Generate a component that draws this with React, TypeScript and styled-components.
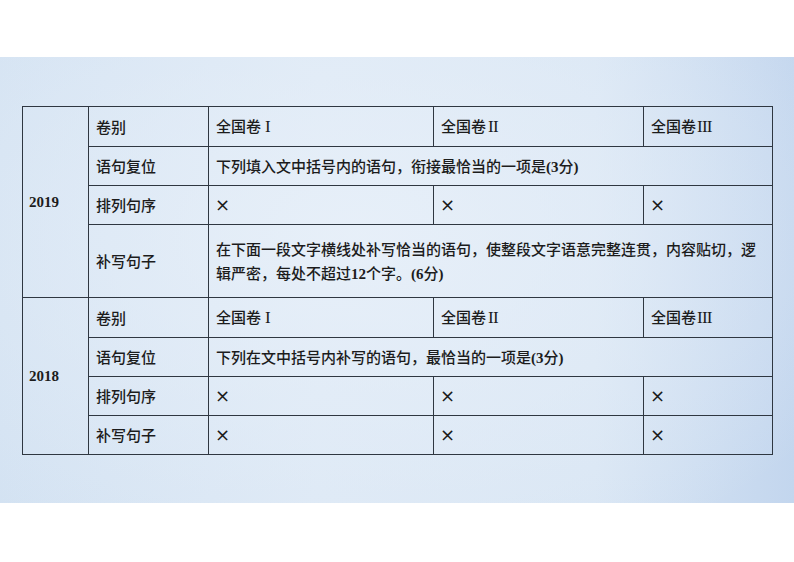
import React from "react";
import styled, { createGlobalStyle } from "styled-components";

const Global = createGlobalStyle`
  html, body { margin: 0; padding: 0; background: #ffffff; }
  body { font-family: "Liberation Serif", "Noto Sans CJK SC", serif; }
`;

const Panel = styled.div`
  margin-top: 57px;
  height: 446px;
  box-sizing: border-box;
  padding: 49px 0 0 22px;
  background:
    radial-gradient(ellipse 70% 80% at 45% 40%, rgba(232, 240, 249, 0.9) 0%, rgba(232, 240, 249, 0) 100%),
    linear-gradient(90deg, #d3e2f2 0%, #dce8f5 40%, #d9e6f4 75%, #c3d6ee 100%);
`;

const Table = styled.table`
  border-collapse: collapse;
  table-layout: fixed;
  width: 750px;
  color: #1c1c1c;
  font-family: "Liberation Serif", "Noto Sans CJK SC", serif;
  font-size: 15px;
`;

const Row = styled.tr<{ $h: number }>`
  height: ${(p) => p.$h}px;
`;

const Cell = styled.td`
  border: 1.3px solid #2f3741;
  padding: 0 6px 0 7px;
  vertical-align: middle;
  font-family: "Noto Sans CJK SC", "Liberation Serif", sans-serif;
  font-weight: 500;
  line-height: 24px;
  text-align: left;
`;

const YearCell = styled(Cell)`
  font-family: "Liberation Serif", serif;
  font-weight: 700;
  padding-left: 6px;
`;

const Num = styled.span`
  font-family: "Liberation Serif", serif;
  font-weight: 700;
`;

const Roman = styled.span<{ $gap: number }>`
  font-family: "Liberation Serif", serif;
  font-weight: 400;
  font-size: 17px;
  margin-left: ${(p) => p.$gap}px;
  letter-spacing: -0.8px;
`;

const Cross = styled.span`
  font-family: "DejaVu Sans", sans-serif;
  font-weight: 400;
  font-size: 18px;
  margin-left: -1px;
`;

const X = () => <Cross>×</Cross>;

const Header = () => (
  <>
    <Cell>卷别</Cell>
    <Cell>
      全国卷<Roman $gap={4}>I</Roman>
    </Cell>
    <Cell>
      全国卷<Roman $gap={2}>II</Roman>
    </Cell>
    <Cell>
      全国卷<Roman $gap={1}>III</Roman>
    </Cell>
  </>
);

export default function App() {
  return (
    <>
      <Global />
      <Panel>
        <Table>
          <colgroup>
            <col style={{ width: 66 }} />
            <col style={{ width: 120 }} />
            <col style={{ width: 225 }} />
            <col style={{ width: 210 }} />
            <col style={{ width: 129 }} />
          </colgroup>
          <tbody>
            <Row $h={40}>
              <YearCell rowSpan={4}>2019</YearCell>
              <Header />
            </Row>
            <Row $h={39}>
              <Cell>语句复位</Cell>
              <Cell colSpan={3}>
                下列填入文中括号内的语句，衔接最恰当的一项是<Num>(3</Num>分<Num>)</Num>
              </Cell>
            </Row>
            <Row $h={39}>
              <Cell>排列句序</Cell>
              <Cell><X /></Cell>
              <Cell><X /></Cell>
              <Cell><X /></Cell>
            </Row>
            <Row $h={73}>
              <Cell>补写句子</Cell>
              <Cell colSpan={3}>
                在下面一段文字横线处补写恰当的语句，使整段文字语意完整连贯，内容贴切，逻辑严密，每处不超过<Num>12</Num>个字。<Num>(6</Num>分<Num>)</Num>
              </Cell>
            </Row>
            <Row $h={40}>
              <YearCell rowSpan={5}>2018</YearCell>
              <Header />
            </Row>
            <Row $h={39}>
              <Cell>语句复位</Cell>
              <Cell colSpan={3}>
                下列在文中括号内补写的语句，最恰当的一项是<Num>(3</Num>分<Num>)</Num>
              </Cell>
            </Row>
            <Row $h={39}>
              <Cell>排列句序</Cell>
              <Cell><X /></Cell>
              <Cell><X /></Cell>
              <Cell><X /></Cell>
            </Row>
            <Row $h={39}>
              <Cell>补写句子</Cell>
              <Cell><X /></Cell>
              <Cell><X /></Cell>
              <Cell><X /></Cell>
            </Row>
          </tbody>
        </Table>
      </Panel>
    </>
  );
}
